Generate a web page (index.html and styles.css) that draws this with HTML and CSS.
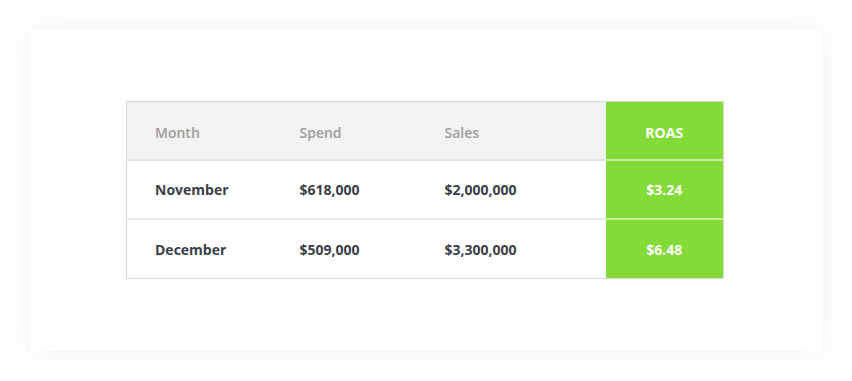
FILE: index.html
```html
<!DOCTYPE html>
<html>
<head>
<meta charset="utf-8">
<link rel="stylesheet" href="styles.css">
</head>
<body>
<div class="card">
  <table class="roas-table">
    <thead>
      <tr>
        <th class="c1">Month</th>
        <th class="c2">Spend</th>
        <th class="c3">Sales</th>
        <th class="roas">ROAS</th>
      </tr>
    </thead>
    <tbody>
      <tr>
        <td>November</td>
        <td>$618,000</td>
        <td>$2,000,000</td>
        <td class="roas">$3.24</td>
      </tr>
      <tr>
        <td>December</td>
        <td>$509,000</td>
        <td>$3,300,000</td>
        <td class="roas">$6.48</td>
      </tr>
    </tbody>
  </table>
</div>
</body>
</html>
```

FILE: styles.css
```css
html, body {
  margin: 0;
  background: #ffffff;
}
body {
  padding: 30px;
  font-family: "Open Sans", "Liberation Sans", sans-serif;
}
.card {
  width: 792px;
  height: 321px;
  box-sizing: border-box;
  padding: 71px 0 0 96px;
  background: #ffffff;
  box-shadow: 0 0 28px rgba(0, 0, 0, 0.06);
}
.roas-table {
  width: 598px;
  border-collapse: collapse;
  border: 1px solid #d9d9d9;
  font-size: 14px;
}
.roas-table th,
.roas-table td {
  text-align: left;
  padding: 0 0 0 28px;
  box-sizing: border-box;
  white-space: nowrap;
}
.roas-table th {
  height: 58px;
  padding-top: 5px;
  background: #f2f2f2;
  color: #9d9d9d;
  font-weight: 600;
  border-bottom: 2px solid #e3e3e3;
}
.roas-table td {
  height: 59px;
  color: #3b4049;
  font-weight: 700;
  border-bottom: 2px solid #e6e6e6;
}
.roas-table tbody tr:last-child td {
  height: 60px;
  padding-top: 1px;
  border-bottom: 1px solid #d9d9d9;
}
.roas-table .c1 { width: 145px; }
.roas-table .c2 { width: 145px; }
.roas-table .c3 { width: 189px; }
.roas-table .roas {
  background: #84db37;
  color: #ffffff;
  text-align: center;
  padding-left: 0;
  font-weight: 700;
  border-bottom-color: #c9ec9e;
}
.roas-table tbody tr:last-child .roas {
  border-bottom-color: #d9d9d9;
}
```
